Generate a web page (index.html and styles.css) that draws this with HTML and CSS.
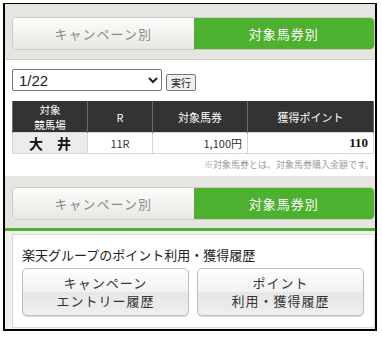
FILE: index.html
```html
<!DOCTYPE html>
<html lang="ja">
<head>
    <meta charset="UTF-8">
    <title>対象馬券別</title>
    <link rel="stylesheet" href="styles.css">
</head>
<body>
<div class="frame">
    <div class="band">
        <div class="tabs">
            <div class="tab">キャンペーン別</div>
            <div class="tab active">対象馬券別</div>
        </div>
    </div>

    <div class="panel">
        <form class="date-form">
            <select class="date-select">
                <option>1/22</option>
            </select>
            <button type="button" class="run-button">実行</button>
        </form>

        <table class="result">
            <tr>
                <th class="col-place"><span class="th-line">対象</span><span class="th-line">競馬場</span></th>
                <th class="col-race">R</th>
                <th class="col-ticket">対象馬券</th>
                <th>獲得ポイント</th>
            </tr>
            <tr>
                <td class="place">大　井</td>
                <td class="race">11R</td>
                <td class="amount">1,100円</td>
                <td class="point">110</td>
            </tr>
        </table>
        <p class="note">※対象馬券とは、対象馬券購入金額です。</p>
    </div>

    <div class="band band-bottom">
        <div class="tabs">
            <div class="tab">キャンペーン別</div>
            <div class="tab active">対象馬券別</div>
        </div>
    </div>

    <div class="history-wrap">
        <div class="history">
            <h3>楽天グループのポイント利用・獲得履歴</h3>
            <div class="history-buttons">
                <a class="history-button">キャンペーン<br>エントリー履歴</a>
                <a class="history-button">ポイント<br>利用・獲得履歴</a>
            </div>
        </div>
    </div>
</div>
</body>
</html>
```

FILE: styles.css
```css
body {
    margin: 0;
    font-family: "Noto Sans CJK JP", "Noto Sans", sans-serif;
    background: #fff;
}
.frame {
    margin: 3px 0 0 3px;
    width: 370px;
    height: 325px;
    border: 2px solid #000;
    border-top-width: 1px;
    overflow: hidden;
}
.band {
    background: #e7e5e0;
    padding: 13px 0 9px 7px;
    border-bottom: 1px solid #d3d0c9;
}
.tabs {
    display: flex;
    height: 31px;
    border: 1px solid #cfccc6;
    border-radius: 5px;
    overflow: hidden;
}
.tab {
    flex: 1;
    display: flex;
    align-items: center;
    justify-content: center;
    font-size: 13px;
    color: #8a8a8a;
    letter-spacing: 1px;
    background: linear-gradient(#fcfcfb, #f3f2ef 50%, #e9e7e2);
}
.tab.active {
    background: #4db12f;
    color: #fff;
}
.panel {
    padding: 9px 1px 0 7px;
    height: 107px;
}
.date-form {
    display: flex;
    align-items: flex-end;
    gap: 4px;
    margin: 0;
}
.date-select {
    width: 150px;
    height: 22px;
    font-family: "Liberation Sans", sans-serif;
    font-size: 15px;
    color: #222;
    border: 1px solid #777;
    border-radius: 2px;
    background: #fff;
    padding: 0 2px;
}
.run-button {
    height: 17px;
    padding: 0 4px;
    font-size: 10px;
    font-family: "Noto Sans CJK JP", sans-serif;
    line-height: 1;
    border: 1px solid #777;
    border-radius: 2px;
    background: #efefef;
    color: #222;
}
.result {
    width: 100%;
    margin-top: 10px;
    border-collapse: collapse;
    font-size: 11px;
}
.result th {
    background: #333;
    color: #fff;
    font-weight: normal;
    height: 31px;
    line-height: 14px;
    padding: 0;
    border-left: 1px solid #6a6a6a;
    border-right: 1px solid #6a6a6a;
}
.th-line {
    display: block;
    font-size: 10.5px;
    line-height: 15px;
}
.col-place { width: 74px; }
.col-race { width: 64px; }
.col-ticket { width: 94px; }
.result td {
    height: 18px;
    padding: 0 5px;
    border: 1px solid #d6d6d6;
    color: #333;
}
.result td.place {
    background: #ececec;
    text-align: center;
    font-weight: bold;
    font-size: 14px;
    color: #111;
}
.result td.race {
    text-align: center;
}
.result td.amount {
    text-align: right;
}
.result td.point {
    text-align: right;
    font-family: "Liberation Serif", serif;
    font-weight: bold;
    font-size: 13px;
    color: #111;
}
.note {
    margin: 4px 0 0;
    text-align: right;
    font-size: 9px;
    color: #9a9a9a;
}
.band-bottom {
    padding: 11px 0 8px 7px;
    border-bottom: 3px solid #4db12f;
}
.history-wrap {
    background: #f1f0ec;
    padding: 3px 0 0 7px;
    height: 100px;
}
.history {
    background: #fff;
    border: 1px solid #dcdad5;
    padding: 10px 10px 11px 9px;
}
.history h3 {
    margin: 0 0 4px;
    font-size: 13px;
    font-weight: normal;
    color: #222;
}
.history-buttons {
    display: flex;
    gap: 8px;
}
.history-button {
    flex: 1;
    height: 46px;
    display: flex;
    align-items: center;
    justify-content: center;
    text-align: center;
    font-size: 13px;
    line-height: 18px;
    letter-spacing: 1px;
    color: #333;
    border: 1px solid #bdbdbd;
    border-radius: 5px;
    background: linear-gradient(#fdfdfd, #f2f2f2 50%, #e6e6e6 50%, #efefef);
    box-shadow: 0 1px 1px rgba(0, 0, 0, 0.15);
}
```
